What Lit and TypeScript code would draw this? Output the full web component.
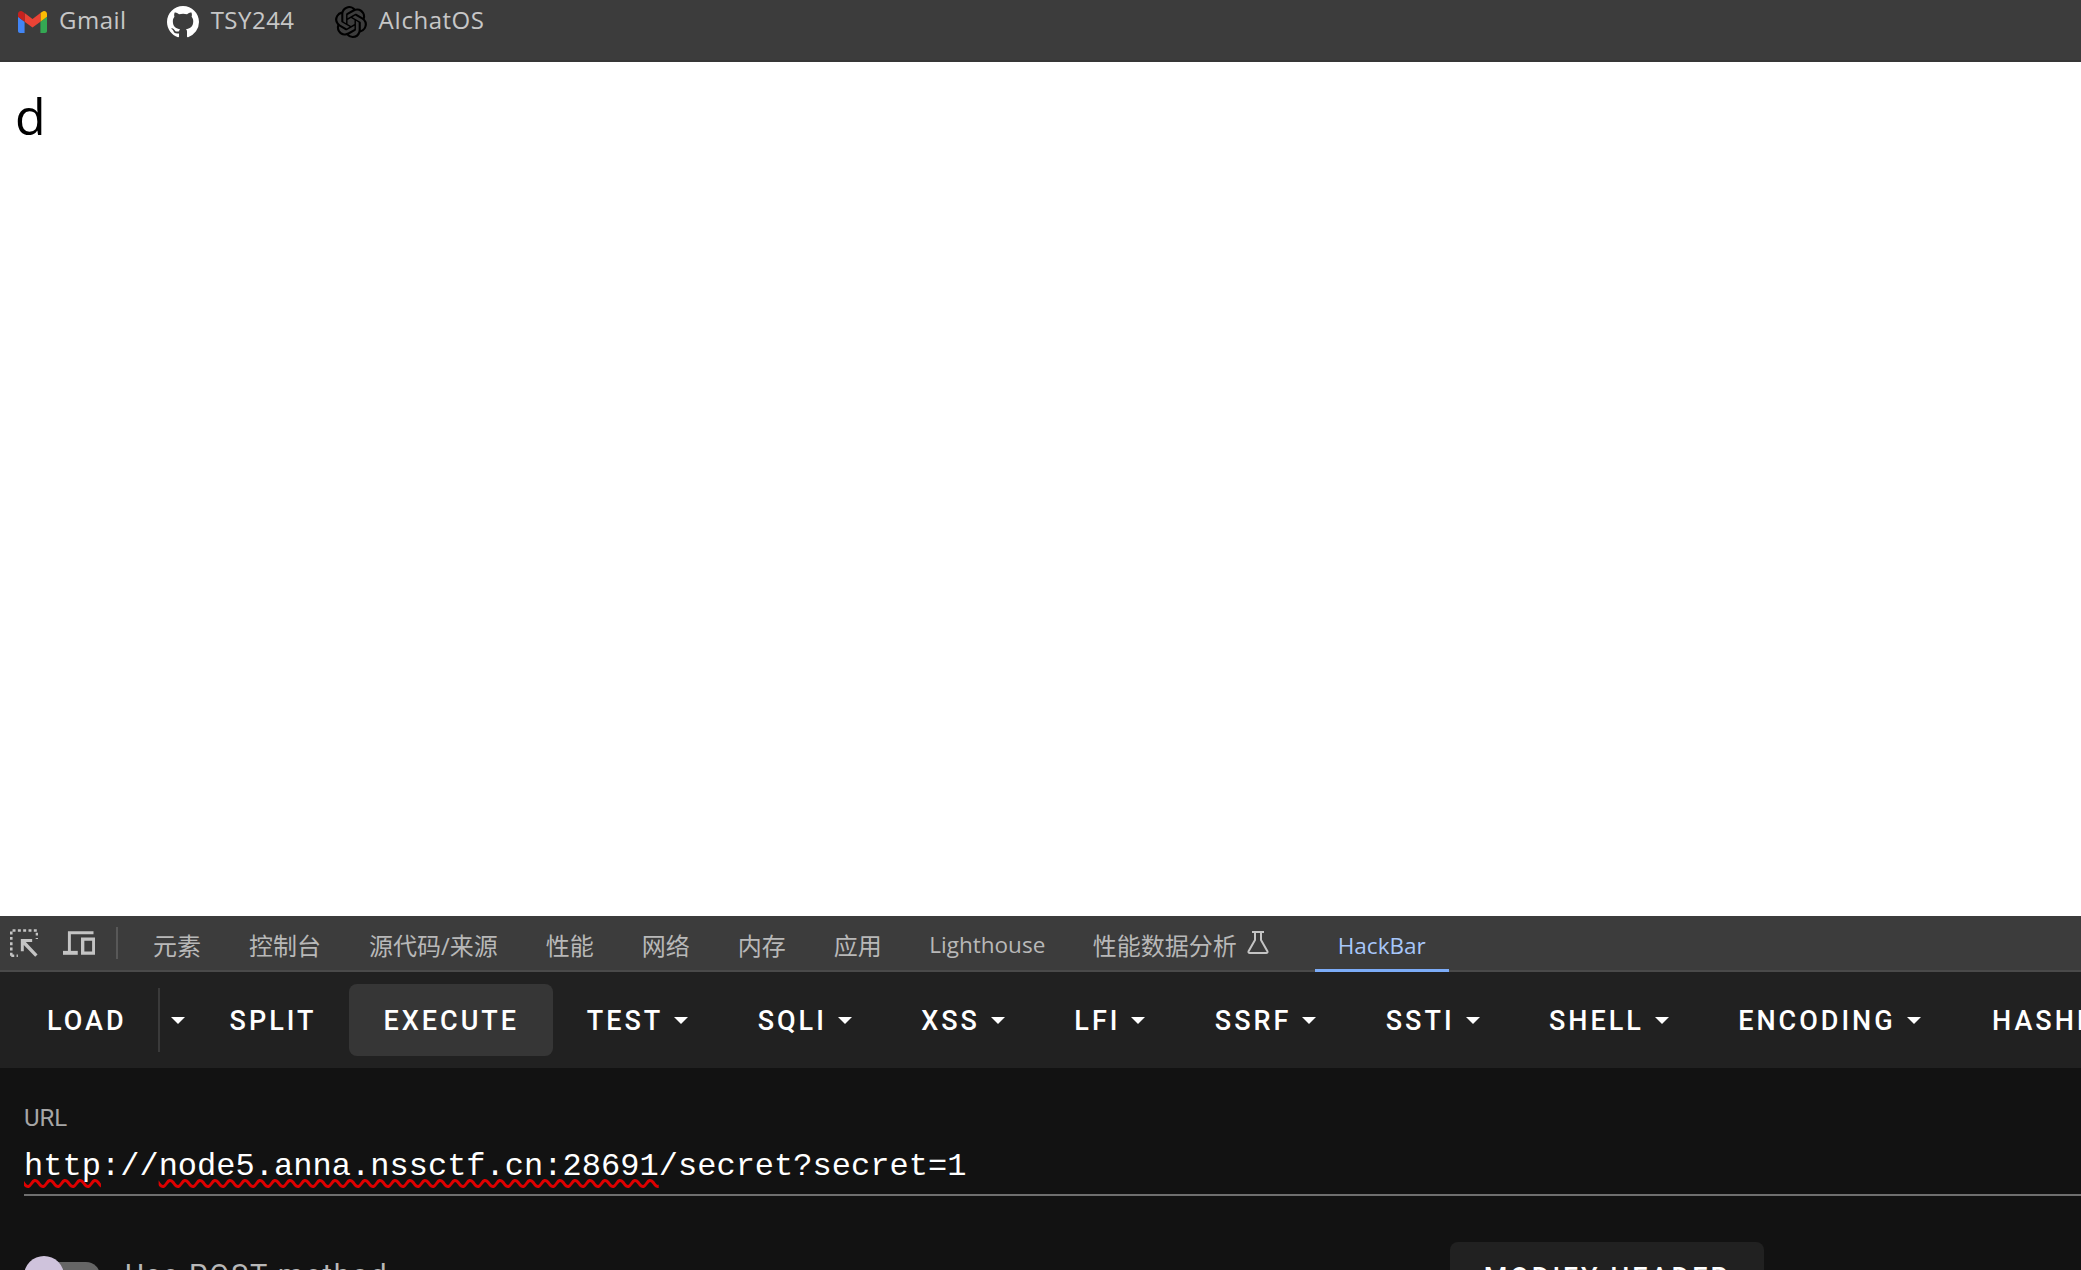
import { LitElement, html, css } from "lit";
import { customElement } from "lit/decorators.js";

const gmail = html`<svg class="ic-gmail" viewBox="52 42 88 66">
  <path fill="#4285f4" d="M58 108h14V74L52 59v43c0 3.32 2.69 6 6 6"/>
  <path fill="#34a853" d="M120 108h14c3.32 0 6-2.69 6-6V59l-20 15"/>
  <path fill="#fbbc04" d="M120 48v26l20-15v-8c0-7.42-8.47-11.65-14.4-7.2"/>
  <path fill="#ea4335" d="M72 74V48l24 18 24-18v26L96 92"/>
  <path fill="#c5221f" d="M52 51v8l20 15V48l-5.6-4.2c-5.94-4.45-14.4-.22-14.4 7.2"/>
</svg>`;

const github = html`<svg class="ic-round" viewBox="0 0 16 16"><path fill="#fff" d="M8 0C3.58 0 0 3.58 0 8c0 3.54 2.29 6.53 5.47 7.59.4.07.55-.17.55-.38 0-.19-.01-.82-.01-1.49-2.01.37-2.53-.49-2.69-.94-.09-.23-.48-.94-.82-1.13-.28-.15-.68-.52-.01-.53.63-.01 1.08.58 1.23.82.72 1.21 1.87.87 2.33.66.07-.52.28-.87.51-1.07-1.78-.2-3.64-.89-3.64-3.95 0-.87.31-1.59.82-2.15-.08-.2-.36-1.02.08-2.12 0 0 .67-.21 2.2.82.64-.18 1.32-.27 2-.27.68 0 1.36.09 2 .27 1.53-1.04 2.2-.82 2.2-.82.44 1.1.16 1.92.08 2.12.51.56.82 1.27.82 2.15 0 3.07-1.87 3.75-3.65 3.95.29.25.54.73.54 1.48 0 1.07-.01 1.93-.01 2.2 0 .21.15.46.55.38A8.013 8.013 0 0016 8c0-4.42-3.58-8-8-8z"/></svg>`;

const openai = html`<svg class="ic-round" viewBox="0 0 24 24"><path fill="#000" d="M22.2819 9.8211a5.9847 5.9847 0 0 0-.5157-4.9108 6.0462 6.0462 0 0 0-6.5098-2.9A6.0651 6.0651 0 0 0 4.9807 4.1818a5.9847 5.9847 0 0 0-3.9977 2.9 6.0462 6.0462 0 0 0 .7427 7.0966 5.98 5.98 0 0 0 .511 4.9107 6.051 6.051 0 0 0 6.5146 2.9001A5.9847 5.9847 0 0 0 13.2599 24a6.0557 6.0557 0 0 0 5.7718-4.2058 5.9894 5.9894 0 0 0 3.9977-2.9001 6.0557 6.0557 0 0 0-.7475-7.0729zm-9.022 12.6081a4.4755 4.4755 0 0 1-2.8764-1.0408l.1419-.0804 4.7783-2.7582a.7948.7948 0 0 0 .3927-.6813v-6.7369l2.02 1.1686a.071.071 0 0 1 .038.052v5.5826a4.504 4.504 0 0 1-4.4945 4.4944zm-9.6607-4.1254a4.4708 4.4708 0 0 1-.5346-3.0137l.142.0852 4.783 2.7582a.7712.7712 0 0 0 .7806 0l5.8428-3.3685v2.3324a.0804.0804 0 0 1-.0332.0615L9.74 19.9502a4.4992 4.4992 0 0 1-6.1408-1.6464zM2.3408 7.8956a4.485 4.485 0 0 1 2.3655-1.9728V11.6a.7664.7664 0 0 0 .3879.6765l5.8144 3.3543-2.0201 1.1685a.0757.0757 0 0 1-.071 0l-4.8303-2.7865A4.504 4.504 0 0 1 2.3408 7.872zm16.5963 3.8558L13.1038 8.364 15.1192 7.2a.0757.0757 0 0 1 .071 0l4.8303 2.7913a4.4944 4.4944 0 0 1-.6765 8.1042v-5.6772a.79.79 0 0 0-.407-.667zm2.0107-3.0231l-.142-.0852-4.7735-2.7818a.7759.7759 0 0 0-.7854 0L9.409 9.2297V6.8974a.0662.0662 0 0 1 .0284-.0615l4.8303-2.7866a4.4992 4.4992 0 0 1 6.6802 4.66zM8.3065 12.863l-2.02-1.1638a.0804.0804 0 0 1-.038-.0567V6.0742a4.4992 4.4992 0 0 1 7.3757-3.4537l-.142.0805L8.704 5.459a.7948.7948 0 0 0-.3927.6813zm1.0976-2.3654l2.602-1.4998 2.6069 1.4998v2.9994l-2.5974 1.4997-2.6067-1.4997Z"/></svg>`;

const inspect = html`<svg class="ic-inspect" viewBox="0 0 28 28" fill="none">
  <path stroke="#c4c4c4" stroke-width="2.6" stroke-dasharray="3 2.4" d="M1.3 27V1.3H27.4V10"/>
  <path stroke="#c4c4c4" stroke-width="2.6" stroke-dasharray="3 2.4" d="M1.3 27H8"/>
  <path fill="#c4c4c4" d="M11 10h11.5v3h-6.4L28 25.6 25.6 28 14 16v6.5h-3z"/>
</svg>`;

const device = html`<svg class="ic-device" viewBox="0 0 33 24" fill="none">
  <path stroke="#c4c4c4" stroke-width="3" d="M6.5 21V1.5H31"/>
  <path fill="#c4c4c4" d="M0 20h15v4H0z"/>
  <path stroke="#c4c4c4" stroke-width="3.4" d="M20 8h11.3v14.3H20z"/>
</svg>`;

const flask = html`<svg class="ic-flask" viewBox="0 0 22 23" fill="none" stroke="#c4c4c4" stroke-width="2">
  <path d="M5 1h12M8 1v8L1.6 20.2c-.5 1 .1 1.8 1.2 1.8h16.4c1.1 0 1.7-.8 1.2-1.8L14 9V1"/>
</svg>`;

const tabs = ["元素", "控制台", "源代码/来源", "性能", "网络", "内存", "应用"];
const menus = ["TEST", "SQLI", "XSS", "LFI", "SSRF", "SSTI", "SHELL", "ENCODING"];

@customElement("app-root")
export class AppRoot extends LitElement {
  static styles = css`
    :host {
      display: flex;
      flex-direction: column;
      height: 1270px;
      overflow: hidden;
      font-family: "Open Sans", "Noto Sans CJK SC", sans-serif;
      background: #fff;
    }
    .bookmarks {
      height: 62px;
      box-sizing: border-box;
      flex: none;
      background: #3c3c3c;
      border-bottom: 2px solid #363636;
      display: flex;
      align-items: flex-start;
      padding: 4px 0 0 18px;
      gap: 40px;
      color: #c7c7c7;
      font-size: 24px;
      line-height: 32px;
      letter-spacing: 0.5px;
    }
    .mark { display: flex; align-items: center; gap: 12px; }
    .mark span { padding-bottom: 3px; }
    .ic-gmail { width: 29px; height: 22px; }
    .ic-round { width: 32px; height: 32px; }
    .page {
      flex: 1;
      min-height: 0;
      padding: 22px 15px 0;
      color: #000;
      font-size: 50px;
      line-height: 65px;
    }
    .tabbar {
      flex: none;
      height: 56px;
      box-sizing: border-box;
      background: #3c3c3c;
      border-bottom: 2px solid #4a4a4a;
      display: flex;
      align-items: stretch;
      color: #b8b8b8;
      font-size: 24px;
      white-space: nowrap;
    }
    .icons { display: flex; align-items: center; padding-left: 10px; width: 118px; box-sizing: border-box; }
    .ic-inspect { width: 28px; height: 28px; }
    .ic-device { width: 33px; height: 24px; margin-left: 25px; }
    .sep { width: 2px; height: 32px; background: #585858; margin-left: 21px; }
    .tab { display: flex; align-items: center; padding: 3px 24px 0; gap: 10px; }
    .tab.first { padding-left: 35px; }
    .tab.latin { font-size: 22.5px; padding: 3px 23.5px 0; }
    .ic-flask { width: 22px; height: 23px; margin-top: -4px; }
    .tab.active {
      color: #a8c7fa;
      margin-left: 22px;
      margin-bottom: -2px;
      padding: 5px 23px 0;
      border-bottom: 3px solid #7cacf8;
    }
    .toolbar {
      flex: none;
      height: 96px;
      background: #212121;
      display: flex;
      align-items: center;
      padding-left: 13px;
      color: #fff;
      font-family: Roboto, sans-serif;
      font-weight: 500;
      font-size: 27px;
      letter-spacing: 3px;
      white-space: nowrap;
    }
    .btn {
      flex: none;
      height: 72px;
      box-sizing: border-box;
      padding: 1px 34px 0;
      display: flex;
      align-items: center;
      gap: 11px;
      border-radius: 8px;
    }
    .btn.load { padding-right: 31px; }
    .btn.menu { padding: 1px 34.7px 0; }
    .btn.hover { background: #363636; margin: 0 -1px; }
    .btn.last { margin-left: 2px; }
    .vline { width: 2px; height: 64px; background: #3a3a3a; flex: none; }
    .drop { flex: none; width: 36px; display: flex; justify-content: center; }
    .arrow {
      flex: none;
      width: 0;
      height: 0;
      border-left: 7px solid transparent;
      border-right: 7px solid transparent;
      border-top: 7px solid #fff;
    }
    .panel {
      flex: none;
      height: 202px;
      box-sizing: border-box;
      background: #121212;
      padding: 36px 0 0 24px;
      overflow: hidden;
    }
    .label {
      color: #a6a6a6;
      font-family: Roboto, sans-serif;
      font-size: 24px;
      line-height: 28px;
    }
    .url {
      margin-top: 15px;
      height: 47px;
      border-bottom: 2px solid #6f6f6f;
      color: #fff;
      font-family: "Liberation Mono", monospace;
      font-size: 32px;
      letter-spacing: 0.03px;
      line-height: 40px;
      white-space: nowrap;
    }
    .bad { text-decoration: underline wavy #e00000 2.5px; text-underline-offset: 4px; text-decoration-skip-ink: none; }
    .row {
      margin-top: 46px;
      display: grid;
      grid-template-columns: 1426px 314px;
      align-items: start;
    }
    .toggle {
      display: flex;
      align-items: flex-start;
      margin-top: 14px;
      color: #b8b8b8;
      font-family: Roboto, sans-serif;
      font-size: 29px;
      letter-spacing: 1.9px;
      line-height: 38px;
    }
    .track {
      position: relative;
      width: 76px;
      height: 28px;
      margin: 6px 25px 0 0;
      background: #666;
      border-radius: 14px;
    }
    .knob {
      position: absolute;
      left: 0;
      top: -6px;
      width: 40px;
      height: 40px;
      border-radius: 50%;
      background: #cfc3dc;
    }
    .modify {
      height: 72px;
      background: #212121;
      border-radius: 8px;
      color: #fff;
      font-family: Roboto, sans-serif;
      font-weight: 500;
      font-size: 27px;
      letter-spacing: 3px;
      line-height: 72px;
      text-align: center;
      white-space: nowrap;
    }
  `;

  render() {
    return html`
      <div class="bookmarks">
        <div class="mark">${gmail}<span>Gmail</span></div>
        <div class="mark">${github}<span>TSY244</span></div>
        <div class="mark">${openai}<span>AIchatOS</span></div>
      </div>
      <div class="page">d</div>
      <div class="tabbar">
        <div class="icons">${inspect}${device}<div class="sep"></div></div>
        ${tabs.map((t, i) => html`<div class="tab ${i === 0 ? "first" : ""}">${t}</div>`)}
        <div class="tab latin">Lighthouse</div>
        <div class="tab">性能数据分析${flask}</div>
        <div class="tab latin active">HackBar</div>
      </div>
      <div class="toolbar">
        <div class="btn load">LOAD</div>
        <div class="vline"></div>
        <div class="drop"><span class="arrow"></span></div>
        <div class="btn">SPLIT</div>
        <div class="btn hover">EXECUTE</div>
        ${menus.map((m) => html`<div class="btn menu">${m}<span class="arrow"></span></div>`)}
        <div class="btn menu last">HASHING</div>
      </div>
      <div class="panel">
        <div class="label">URL</div>
        <div class="url"><span class="bad">http</span>://<span class="bad">node5.anna.nssctf.cn:28691</span>/secret?secret=1</div>
        <div class="row">
          <div class="toggle">
            <div class="track"><div class="knob"></div></div>
            <span>Use POST method</span>
          </div>
          <div class="modify">MODIFY HEADER</div>
        </div>
      </div>
    `;
  }
}
